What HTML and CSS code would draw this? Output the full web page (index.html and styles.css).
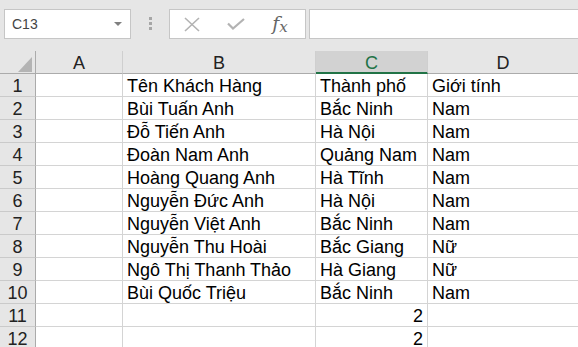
FILE: index.html
```html
<!DOCTYPE html>
<html lang="vi">
<head>
<meta charset="utf-8">
<title>Sheet</title>
<link rel="stylesheet" href="styles.css">
</head>
<body>
<div class="toolbar">
  <div class="namebox"><span>C13</span><span class="caret"></span></div>
  <div class="grip"><span class="dot"></span><span class="dot"></span><span class="dot"></span></div>
  <div class="fbtns">
    <div class="slot"><svg width="16" height="15" viewBox="0 0 16 15"><path d="M1 1 L15 14 M15 1 L1 14" stroke="#b3b3b3" stroke-width="1.6" fill="none"/></svg></div>
    <div class="slot"><svg width="18" height="12" viewBox="0 0 18 12"><path d="M1 5.5 L6 10.5 L17 1" stroke="#b3b3b3" stroke-width="2.2" fill="none"/></svg></div>
    <div class="slot fx"><i>f<span class="sub">x</span></i></div>
  </div>
  <div class="finput"></div>
</div>
<div class="sheet">
  <div class="c corner"><span class="tri"></span></div>
  <div class="c hd">A</div>
  <div class="c hd">B</div>
  <div class="c hd sel">C</div>
  <div class="c hd">D</div>

  <div class="c rh">1</div><div class="c"></div><div class="c">Tên Khách Hàng</div><div class="c">Thành phố</div><div class="c">Giới tính</div>
  <div class="c rh">2</div><div class="c"></div><div class="c">Bùi Tuấn Anh</div><div class="c">Bắc Ninh</div><div class="c">Nam</div>
  <div class="c rh">3</div><div class="c"></div><div class="c">Đỗ Tiến Anh</div><div class="c">Hà Nội</div><div class="c">Nam</div>
  <div class="c rh">4</div><div class="c"></div><div class="c">Đoàn Nam Anh</div><div class="c">Quảng Nam</div><div class="c">Nam</div>
  <div class="c rh">5</div><div class="c"></div><div class="c">Hoàng Quang Anh</div><div class="c">Hà Tĩnh</div><div class="c">Nam</div>
  <div class="c rh">6</div><div class="c"></div><div class="c">Nguyễn Đức Anh</div><div class="c">Hà Nội</div><div class="c">Nam</div>
  <div class="c rh">7</div><div class="c"></div><div class="c">Nguyễn Việt Anh</div><div class="c">Bắc Ninh</div><div class="c">Nam</div>
  <div class="c rh">8</div><div class="c"></div><div class="c">Nguyễn Thu Hoài</div><div class="c">Bắc Giang</div><div class="c">Nữ</div>
  <div class="c rh">9</div><div class="c"></div><div class="c">Ngô Thị Thanh Thảo</div><div class="c">Hà Giang</div><div class="c">Nữ</div>
  <div class="c rh">10</div><div class="c"></div><div class="c">Bùi Quốc Triệu</div><div class="c">Bắc Ninh</div><div class="c">Nam</div>
  <div class="c rh">11</div><div class="c"></div><div class="c"></div><div class="c num">2</div><div class="c"></div>
  <div class="c rh">12</div><div class="c"></div><div class="c"></div><div class="c num">2</div><div class="c"></div>
</div>
</body>
</html>
```
FILE: styles.css
```css
html, body {
  margin: 0;
  padding: 0;
}
body {
  width: 578px;
  height: 347px;
  overflow: hidden;
  background: #ffffff;
  font-family: "Liberation Sans", Arial, sans-serif;
}
.toolbar {
  box-sizing: border-box;
  height: 51px;
  background: #e6e6e6;
  display: flex;
  align-items: flex-start;
  padding: 9px 0 0 4px;
}
.namebox {
  box-sizing: border-box;
  width: 127px;
  height: 30px;
  border: 1px solid #c6c6c6;
  background: #ffffff;
  display: flex;
  align-items: center;
  justify-content: space-between;
  padding: 0 8px 0 7px;
  font-size: 14px;
  color: #444444;
}
.caret {
  width: 0;
  height: 0;
  border-left: 4px solid transparent;
  border-right: 4px solid transparent;
  border-top: 4px solid #808080;
}
.grip {
  width: 38px;
  display: flex;
  flex-direction: column;
  align-items: center;
  gap: 2px;
  padding-top: 8px;
}
.dot {
  width: 3px;
  height: 3px;
  background: #a6a6a6;
}
.fbtns {
  box-sizing: border-box;
  width: 137px;
  height: 30px;
  border: 1px solid #c6c6c6;
  background: #ffffff;
  display: flex;
  margin-right: 3px;
}
.slot {
  width: 44px;
  display: flex;
  align-items: center;
  justify-content: center;
}
.fx {
  font-family: "DejaVu Serif", "Liberation Serif", serif;
  font-size: 19px;
  color: #666666;
}
.fx i {
  display: inline-block;
  transform: translateY(-1px);
}
.sub {
  font-size: 15px;
  position: relative;
  top: 2px;
}
.finput {
  box-sizing: border-box;
  flex: 1;
  height: 30px;
  border: 1px solid #c6c6c6;
  background: #ffffff;
  margin-right: -2px;
}
.sheet {
  display: grid;
  grid-template-columns: 36px 87px 193px 112px 151px;
  grid-auto-rows: 23px;
}
.c {
  box-sizing: border-box;
  border-right: 1px solid #d4d4d4;
  border-bottom: 1px solid #d4d4d4;
  padding: 3px 4px 0 4px;
  line-height: 19px;
  font-size: 18px;
  white-space: nowrap;
  overflow: hidden;
  color: #000000;
}
.hd {
  background: #e6e6e6;
  text-align: center;
  color: #222222;
  border-right-color: #cfcfcf;
  border-bottom-color: #ababab;
}
.sel {
  background: #d2d2d2;
  color: #217346;
  border-bottom: 2px solid #217346;
}
.rh {
  background: #e6e6e6;
  text-align: center;
  color: #222222;
  padding-left: 0;
  padding-right: 0;
  border-right-color: #ababab;
  border-bottom-color: #cacaca;
}
.corner {
  background: #e6e6e6;
  border-right-color: #ababab;
  border-bottom-color: #ababab;
  display: flex;
  justify-content: flex-end;
  align-items: flex-end;
  padding: 0 3px 1px 0;
}
.tri {
  width: 0;
  height: 0;
  border-left: 14px solid transparent;
  border-bottom: 15px solid #b4b4b4;
}
.num {
  text-align: right;
}
```
